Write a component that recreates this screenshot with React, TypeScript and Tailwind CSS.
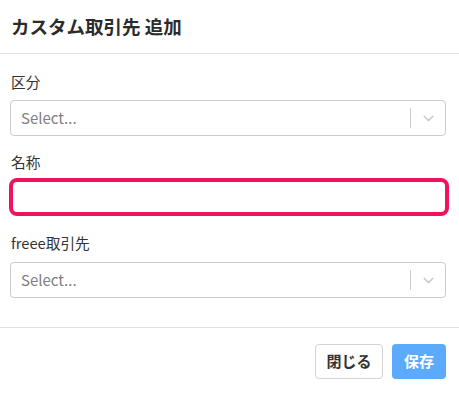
import { ChevronDown } from "lucide-react";

const font = { fontFamily: '"Noto Sans CJK JP", "Noto Sans", sans-serif' };

function SelectBox() {
  return (
    <div className="flex h-[36px] items-center rounded-[4px] border border-[#cccccc] bg-white">
      <span className="flex-1 pl-[10px] text-[15px] text-[#808080]">Select...</span>
      <span className="h-[20px] w-px bg-[#cccccc]" />
      <span className="flex w-[34px] items-center justify-center text-[#cccccc]">
        <ChevronDown size={17} strokeWidth={2} />
      </span>
    </div>
  );
}

export default function App() {
  return (
    <div className="h-[403px] w-[459px] bg-white text-[#333333]" style={font}>
      <div className="flex h-[54px] items-center border-b border-[#dee2e6] pl-[11px] pb-[1px]">
        <h2 className="text-[18.5px] font-bold leading-none text-[#2b2b2b]">カスタム取引先 追加</h2>
      </div>

      <div className="pl-[10px] pr-[13px] pb-[29px]">
        <label className="mt-[18px] mb-[8px] block pl-px text-[14.7px] leading-[20px]">区分</label>
        <SelectBox />

        <label className="mt-[16px] mb-[6px] block pl-px text-[14.7px] leading-[20px]">名称</label>
        <input
          type="text"
          className="-ml-px block h-[38px] w-[440px] rounded-[8px] border-4 border-[#f2125b] bg-white px-2 text-[15px] outline-none"
        />

        <label className="mt-[17px] mb-[9px] block pl-px text-[14.7px] leading-[20px]">freee取引先</label>
        <SelectBox />
      </div>

      <div className="flex justify-end gap-[9px] border-t border-[#dee2e6] pt-[16px] pr-[13px]">
        <button className="h-[35px] w-[68px] rounded-[4px] border border-[#d4d4d4] bg-white text-[15px] font-bold text-[#333333]">
          閉じる
        </button>
        <button className="h-[35px] w-[54px] rounded-[4px] bg-[#5caafc] text-[15px] font-bold text-white">
          保存
        </button>
      </div>
    </div>
  );
}
